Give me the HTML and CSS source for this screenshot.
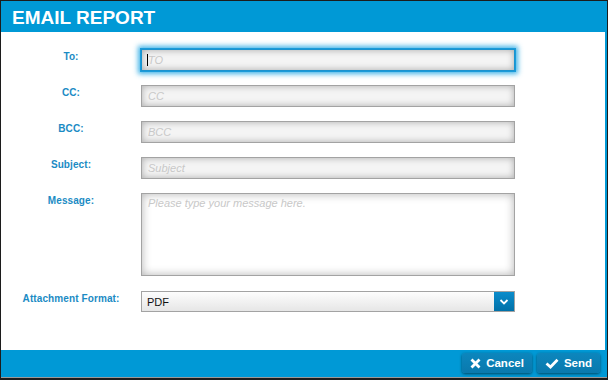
FILE: index.html
```html
<!DOCTYPE html>
<html lang="en">

<head>
    <meta charset="UTF-8">
    <meta name="viewport" content="width=device-width, initial-scale=1.0">
    <title>Email Report</title>

    <link rel="stylesheet" href="styles.css">
</head>

<body>
    <div class="janela">
        <div class="cabecalho">EMAIL REPORT</div>

        <form class="conteudo" onsubmit="event.preventDefault()">
            <label class="rotulo" for="to">To:</label>
            <div class="campo-foco">
                <input class="campo ativo" type="text" id="to" placeholder="TO">
            </div>

            <label class="rotulo" for="cc">CC:</label>
            <input class="campo" type="text" id="cc" placeholder="CC">

            <label class="rotulo" for="bcc">BCC:</label>
            <input class="campo" type="text" id="bcc" placeholder="BCC">

            <label class="rotulo" for="assunto">Subject:</label>
            <input class="campo" type="text" id="assunto" placeholder="Subject">

            <label class="rotulo" for="mensagem">Message:</label>
            <textarea class="campo mensagem" id="mensagem" placeholder="Please type your message here."></textarea>

            <label class="rotulo anexo" for="formato">Attachment Format:</label>
            <div class="selecao anexo" id="formato">
                <span class="selecao-texto">PDF</span>
                <span class="selecao-seta">
                    <svg width="10" height="6" viewBox="0 0 10 6">
                        <path d="M1.5 1 L5 4.5 L8.5 1" fill="none" stroke="#fff" stroke-width="1.8"/>
                    </svg>
                </span>
            </div>
        </form>

        <div class="rodape">
            <button class="botao" type="button">
                <svg width="11" height="11" viewBox="0 0 11 11">
                    <path d="M1.5 1.5 L9.5 9.5 M9.5 1.5 L1.5 9.5" stroke="#fff" stroke-width="2.8"/>
                </svg>
                Cancel
            </button>
            <button class="botao" type="button">
                <svg width="14" height="11" viewBox="0 0 14 11">
                    <path d="M1.5 5.5 L5.5 9 L12.5 1.8" fill="none" stroke="#fff" stroke-width="2.8"/>
                </svg>
                Send
            </button>
        </div>
    </div>
</body>

</html>
```

FILE: styles.css
```css
html {
    background-color: #1c1c1c;
}

body {
    margin: 0;
    padding: 1px 0 0 1px;
    font-family: "Liberation Sans", Arial, sans-serif;
}

.janela {
    width: 606px;
    height: 376px;
    background-color: #0099d6;
    border-bottom: 1px solid #9a9a9a;
    display: flex;
    flex-direction: column;
}

.cabecalho {
    height: 31px;
    line-height: 33px;
    padding-left: 11px;
    color: #fff;
    font-weight: bold;
    font-size: 19px;
}

.conteudo {
    height: 301px;
    margin: 0 2px 0 0;
    padding-top: 17px;
    background-color: #fff;
    display: grid;
    grid-template-columns: 140px 374px;
    grid-auto-rows: min-content;
    row-gap: 14px;
}

.rotulo {
    text-align: center;
    color: #1b8bc4;
    font-weight: bold;
    font-size: 10px;
    letter-spacing: 0.1px;
    line-height: 12px;
    padding-top: 2px;
}

.anexo {
    margin-top: 1px;
}

.campo {
    box-sizing: border-box;
    width: 374px;
    height: 22px;
    margin: 0;
    padding: 0 6px;
    border: 1px solid #a3a3a3;
    background-color: #f4f4f4;
    box-shadow: inset 0 0 7px rgba(0, 0, 0, 0.3);
    font-family: "Liberation Sans", Arial, sans-serif;
    font-size: 11px;
    outline: none;
}

.campo::placeholder {
    color: #c8c8c8;
    font-style: italic;
}

.campo-foco {
    position: relative;
}

.campo.ativo {
    border-color: #1a93cf;
    box-shadow: 0 0 0 1px #1a9bd9, 0 0 5px 3px rgba(20, 160, 225, 0.8), inset 0 0 7px rgba(0, 0, 0, 0.32);
}

.campo-foco::after {
    content: "";
    position: absolute;
    left: 6px;
    top: 5px;
    width: 1px;
    height: 12px;
    background-color: #000;
}

.mensagem {
    height: 83px;
    padding-top: 3px;
    resize: none;
    background-color: #fff;
    box-shadow: inset 0 0 10px rgba(0, 0, 0, 0.3);
}

.selecao {
    box-sizing: border-box;
    width: 374px;
    height: 21px;
    border: 1px solid #a3a3a3;
    background: linear-gradient(#fdfdfd, #e6e6e6);
    display: flex;
    align-items: center;
    font-size: 11px;
    color: #111;
}

.selecao-texto {
    flex: 1;
    padding-left: 5px;
}

.selecao-seta {
    width: 20px;
    height: 19px;
    background: linear-gradient(#0b8ccb, #0071a8);
    display: flex;
    align-items: center;
    justify-content: center;
}

.rodape {
    height: 27px;
    display: flex;
    justify-content: flex-end;
    align-items: flex-start;
    gap: 5px;
    padding: 3px 7px 0 0;
    box-sizing: border-box;
}

.botao {
    height: 20px;
    padding: 0 8px 0 8px;
    border: none;
    border-radius: 3px;
    background: linear-gradient(#0c86bd, #0a79ad);
    box-shadow: 0 1px 3px rgba(0, 0, 0, 0.55);
    color: #fff;
    font-family: "Liberation Sans", Arial, sans-serif;
    font-weight: bold;
    font-size: 11.5px;
    display: flex;
    align-items: center;
    gap: 5px;
    cursor: pointer;
}
```
